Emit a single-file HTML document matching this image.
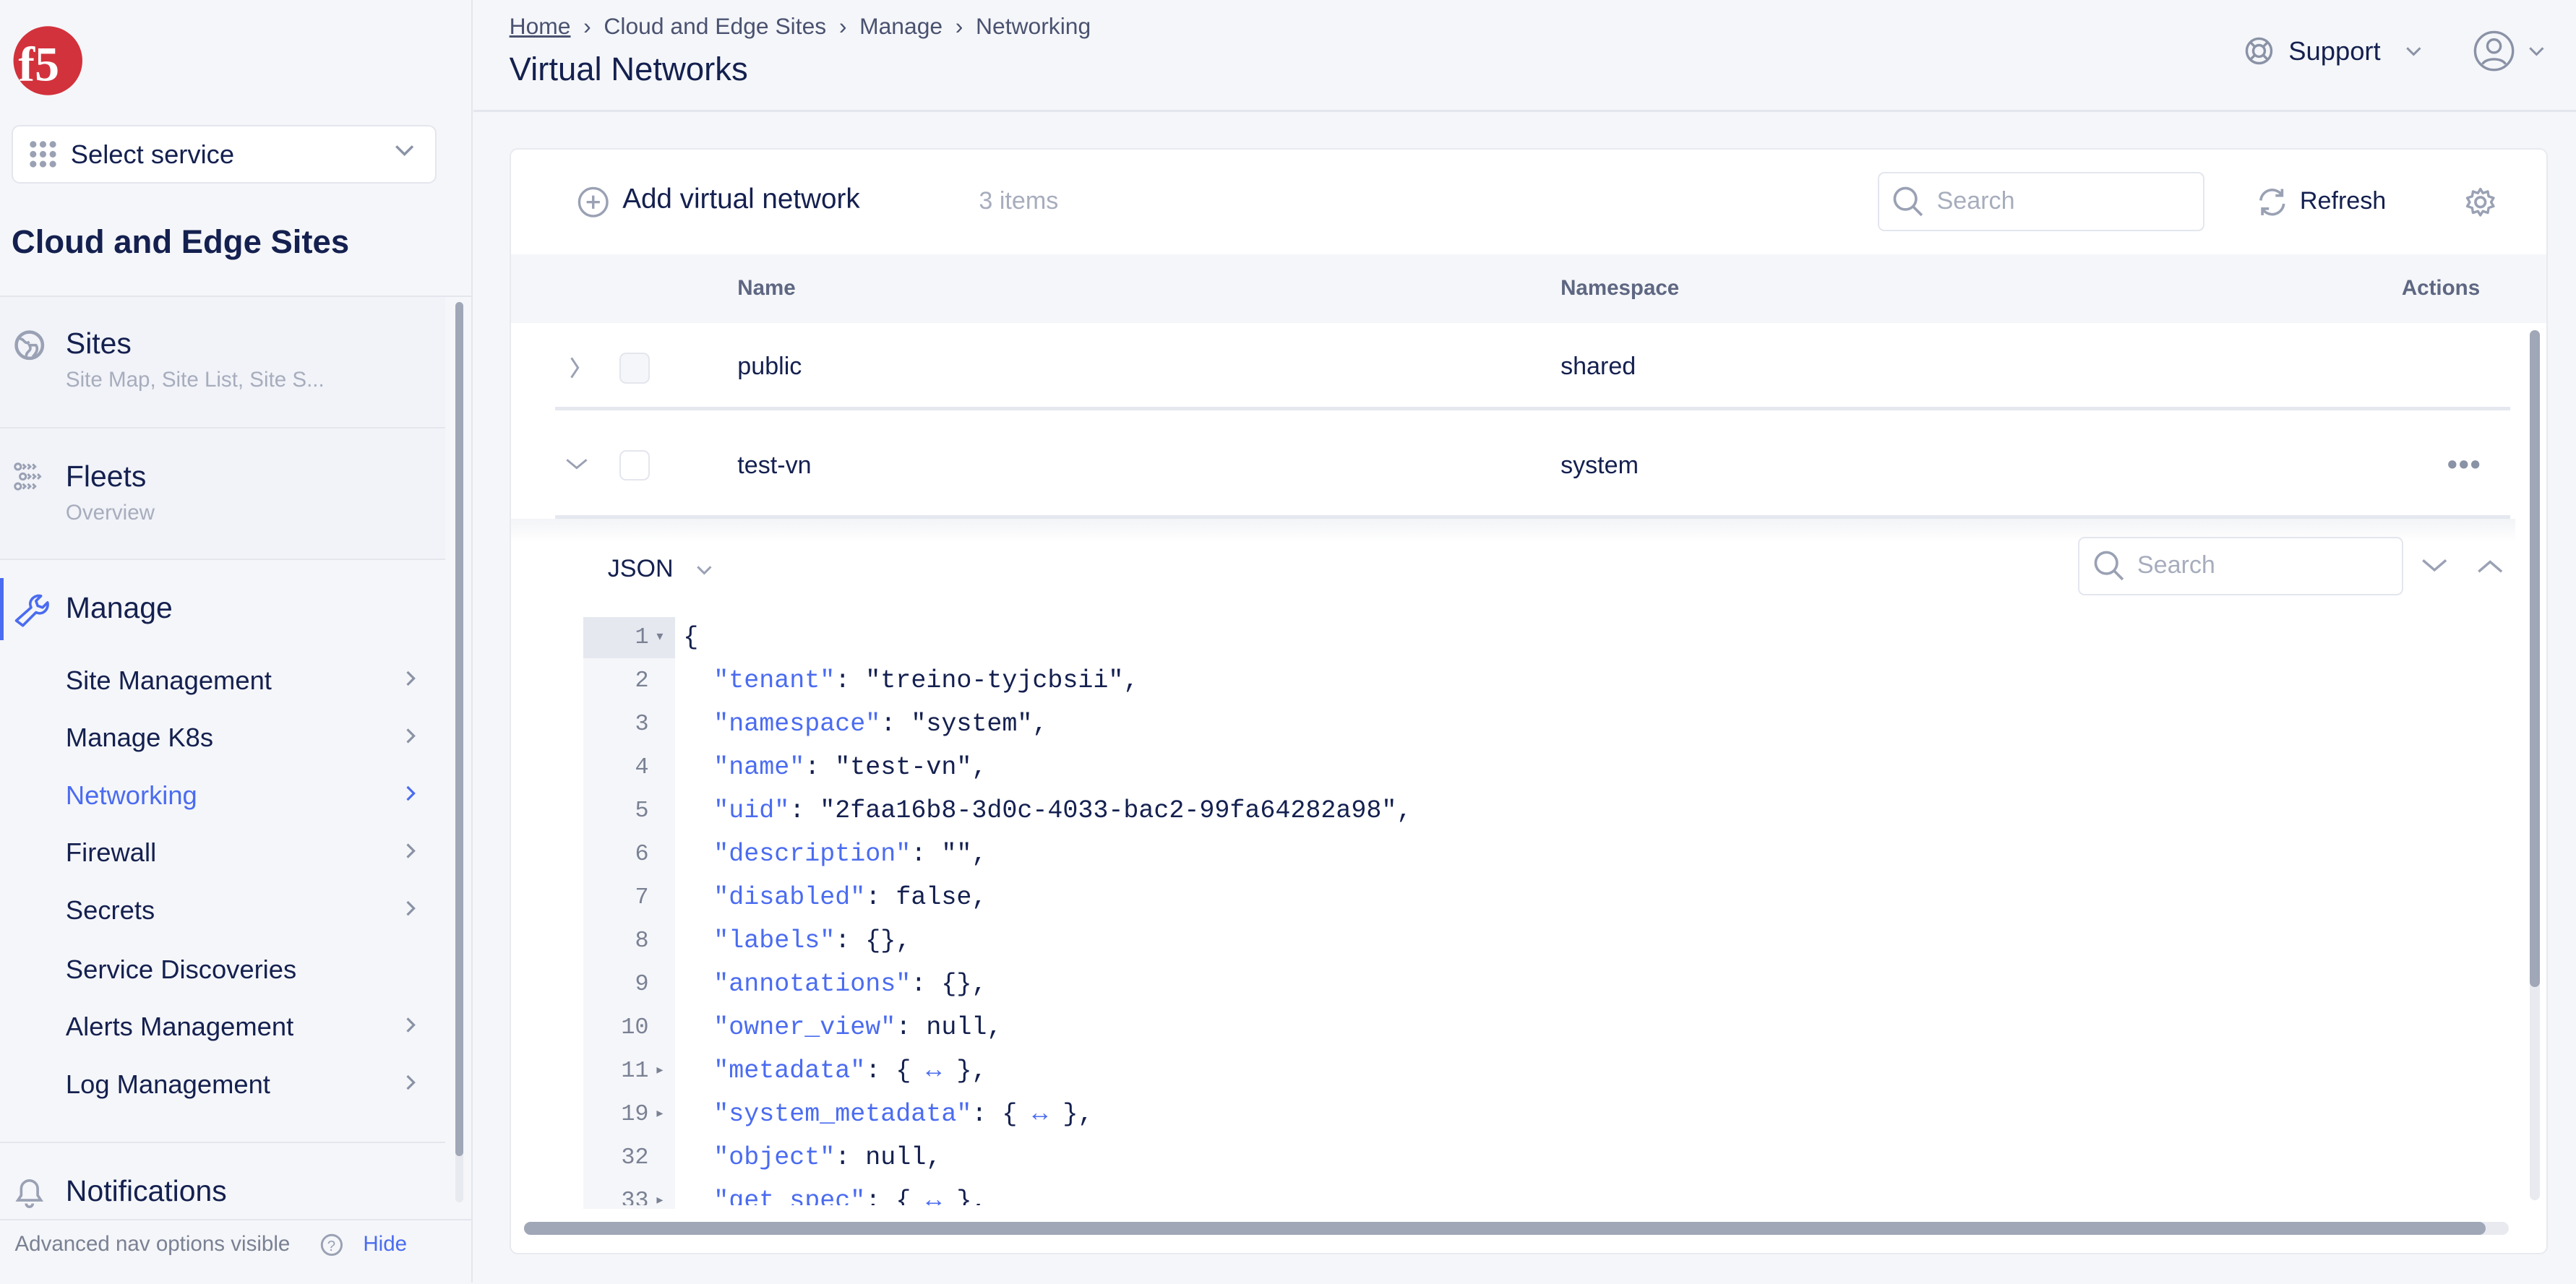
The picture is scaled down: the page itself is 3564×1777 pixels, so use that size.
<!DOCTYPE html>
<html><head><meta charset="utf-8"><style>
html,body{margin:0;padding:0}
body{width:1568px;height:781px;zoom:2.2730;overflow:hidden;background:#f5f6f9;font-family:"Liberation Sans",sans-serif;color:#14204f;position:relative}
.a{position:absolute}
.t{white-space:nowrap}
.side{left:0;top:0;width:287px;height:781px;background:#f5f6f9;border-right:1px solid #e4e6ee}
.sub{font-size:16px;color:#14204f}
.mono{font-family:"Liberation Mono",monospace;font-size:15.4px}
.k{color:#4b6cf0}
.ln{color:#7a8194;width:40px;text-align:right;font-size:14px}
</style></head><body>
<div class="a side">
 <svg class="a" style="left:6px;top:15px" width="46" height="46" viewBox="0 0 46 46"><circle cx="23" cy="22" r="21" fill="#d2323c"/><text x="5" y="34" font-family="Liberation Serif" font-weight="bold" font-size="30" fill="#fff">f5</text></svg>
 <div class="a" style="left:7px;top:76px;width:257px;height:34px;background:#fff;border:1px solid #e4e6ee;border-radius:5px"></div>
 <svg class="a" style="left:17px;top:85px" width="18" height="18"><g fill="#9aa1b4"><circle cx="3" cy="3" r="2"/><circle cx="9" cy="3" r="2"/><circle cx="15" cy="3" r="2"/><circle cx="3" cy="9" r="2"/><circle cx="9" cy="9" r="2"/><circle cx="15" cy="9" r="2"/><circle cx="3" cy="15" r="2"/><circle cx="9" cy="15" r="2"/><circle cx="15" cy="15" r="2"/></g></svg>
 <div class="a t" style="left:43px;top:85px;font-size:16px">Select service</div>
 <svg class="a" style="left:240px;top:88px" width="12" height="8"><path d="M1 1l5 5 5-5" stroke="#8a92a6" fill="none" stroke-width="1.5"/></svg>
 <div class="a t" style="left:7px;top:136px;font-size:20px;font-weight:bold">Cloud and Edge Sites</div>
 <div class="a" style="left:0;top:180px;width:287px;height:1px;background:#e4e6ee"></div>
 <div class="a" style="left:0;top:181px;width:271px;height:160px;background:#f1f3f8"></div>
 <svg class="a" style="left:8px;top:200px" width="20" height="20"><circle cx="10" cy="10" r="8" stroke="#9aa1b4" stroke-width="2" fill="none"/><path d="M4 6c3 0 3 4 6 2M8 17c0-4 4-3 2-7h4c2 3-1 6-2 7" stroke="#9aa1b4" stroke-width="1.6" fill="none"/></svg>
 <div class="a t" style="left:40px;top:199px;font-size:18px">Sites</div>
 <div class="a t" style="left:40px;top:224px;font-size:13px;color:#a7adbd">Site Map, Site List, Site S...</div>
 <div class="a" style="left:0;top:260px;width:271px;height:1px;background:#e4e6ee"></div>
 <svg class="a" style="left:8px;top:281px" width="20" height="18"><g fill="none" stroke="#9aa1b4" stroke-width="1.3"><circle cx="3" cy="3" r="1.8"/><path d="M6 1.5l1.5 1.5L6 4.5M9 1.5l1.5 1.5L9 4.5M12 1.5l1.5 1.5L12 4.5"/><circle cx="6" cy="9" r="1.8"/><path d="M9 7.5l1.5 1.5L9 10.5M12 7.5l1.5 1.5L12 10.5M15 7.5l1.5 1.5L15 10.5"/><circle cx="3" cy="15" r="1.8"/><path d="M6 13.5l1.5 1.5L6 16.5M9 13.5l1.5 1.5L9 16.5M12 13.5l1.5 1.5L12 16.5"/></g></svg>
 <div class="a t" style="left:40px;top:280px;font-size:18px">Fleets</div>
 <div class="a t" style="left:40px;top:305px;font-size:13px;color:#a7adbd">Overview</div>
 <div class="a" style="left:0;top:340px;width:271px;height:1px;background:#e4e6ee"></div>
 <div class="a" style="left:0;top:352px;width:2px;height:38px;background:#4b6cf0"></div>
 <svg class="a" style="left:8px;top:360px" width="22" height="22"><path d="M2 18l9-8c-2-4 2-8 6-7l-3 3 1 3 3 1 3-3c1 4-3 8-7 6l-8 8z" stroke="#4b6cf0" stroke-width="1.6" fill="none" stroke-linejoin="round"/></svg>
 <div class="a t" style="left:40px;top:360px;font-size:18px">Manage</div>
 <div class="a t sub" style="left:40px;top:405px">Site Management</div>
 <div class="a t sub" style="left:40px;top:440px">Manage K8s</div>
 <div class="a t sub" style="left:40px;top:475px;color:#4b6cf0">Networking</div>
 <div class="a t sub" style="left:40px;top:510px">Firewall</div>
 <div class="a t sub" style="left:40px;top:545px">Secrets</div>
 <div class="a t sub" style="left:40px;top:581px">Service Discoveries</div>
 <div class="a t sub" style="left:40px;top:616px">Alerts Management</div>
 <div class="a t sub" style="left:40px;top:651px">Log Management</div>
 <svg class="a" style="left:246px;top:406px" width="8" height="260"><g stroke="#8a92a6" stroke-width="1.4" fill="none"><path d="M2 3l4 4-4 4"/><path d="M2 38l4 4-4 4"/><path d="M2 73l4 4-4 4" stroke="#4b6cf0"/><path d="M2 108l4 4-4 4"/><path d="M2 143l4 4-4 4"/><path d="M2 214l4 4-4 4"/><path d="M2 249l4 4-4 4"/></g></svg>
 <div class="a" style="left:0;top:695px;width:271px;height:1px;background:#e4e6ee"></div>
 <svg class="a" style="left:8px;top:716px" width="20" height="20"><path d="M3 15h14l-2-3V8a5 5 0 0 0-10 0v4z M8 17a2 2 0 0 0 4 0" stroke="#9aa1b4" stroke-width="1.6" fill="none"/></svg>
 <div class="a t" style="left:40px;top:715px;font-size:18px">Notifications</div>
 <div class="a" style="left:0;top:742px;width:287px;height:39px;background:#f5f6f9;border-top:1px solid #e4e6ee"></div>
 <div class="a t" style="left:9px;top:750px;font-size:13px;color:#7a8194">Advanced nav options visible</div>
 <svg class="a" style="left:195px;top:751px" width="14" height="14"><circle cx="7" cy="7" r="6" stroke="#9aa1b4" fill="none" stroke-width="1.3"/><text x="4.3" y="10.5" font-size="9" fill="#9aa1b4" font-family="Liberation Sans">?</text></svg>
 <div class="a t" style="left:221px;top:750px;font-size:13px;color:#4b6cf0">Hide</div>
 <div class="a" style="left:277px;top:184px;width:5px;height:548px;background:#e8eaf0;border-radius:3px"></div>
 <div class="a" style="left:277px;top:184px;width:5px;height:520px;background:#a0a7b7;border-radius:3px"></div>
</div>

<div class="a t" style="left:310px;top:8px;font-size:14px;color:#4a5270"><span style="text-decoration:underline">Home</span> &nbsp;›&nbsp; Cloud and Edge Sites &nbsp;›&nbsp; Manage &nbsp;›&nbsp; Networking</div>
<div class="a t" style="left:310px;top:31px;font-size:20px">Virtual Networks</div>
<svg class="a" style="left:1366px;top:22px" width="18" height="18"><circle cx="9" cy="9" r="7.5" stroke="#8a92a6" stroke-width="1.5" fill="none"/><circle cx="9" cy="9" r="3.5" stroke="#8a92a6" stroke-width="1.5" fill="none"/><path d="M4 4l2.5 2.5M14 4l-2.5 2.5M4 14l2.5-2.5M14 14l-2.5-2.5" stroke="#8a92a6" stroke-width="1.5"/></svg>
<div class="a t" style="left:1393px;top:22px;font-size:16px">Support</div>
<svg class="a" style="left:1464px;top:28px" width="10" height="7"><path d="M1 1l4 4 4-4" stroke="#8a92a6" fill="none" stroke-width="1.3"/></svg>
<svg class="a" style="left:1505px;top:18px" width="26" height="26"><circle cx="13" cy="13" r="11.5" stroke="#8a92a6" stroke-width="1.5" fill="none"/><circle cx="13" cy="10" r="4" stroke="#8a92a6" stroke-width="1.5" fill="none"/><path d="M6 21c2-4 12-4 14 0" stroke="#8a92a6" stroke-width="1.5" fill="none"/></svg>
<svg class="a" style="left:1539px;top:28px" width="10" height="7"><path d="M1 1l4 4 4-4" stroke="#8a92a6" fill="none" stroke-width="1.3"/></svg>
<div class="a" style="left:288px;top:67px;width:1280px;height:1px;background:#e4e6ee"></div>

<div class="a" style="left:310px;top:90px;width:1239px;height:672px;background:#fff;border:1px solid #e8eaf0;border-radius:5px;overflow:hidden">
 <svg class="a" style="left:40px;top:22px" width="20" height="20"><circle cx="10" cy="10" r="8.5" stroke="#9aa1b4" stroke-width="1.5" fill="none"/><path d="M10 6v8M6 10h8" stroke="#9aa1b4" stroke-width="1.5"/></svg>
 <div class="a t" style="left:68px;top:21px;font-size:17px">Add virtual network</div>
 <div class="a t" style="left:285px;top:23px;font-size:15px;color:#a7adbd">3 items</div>
 <div class="a" style="left:832px;top:14px;width:197px;height:34px;border:1px solid #e4e6ee;border-radius:4px"></div>
 <svg class="a" style="left:841px;top:22px" width="20" height="20"><circle cx="8" cy="8" r="6.5" stroke="#9aa1b4" stroke-width="1.6" fill="none"/><path d="M13 13l5 5" stroke="#9aa1b4" stroke-width="1.6"/></svg>
 <div class="a t" style="left:868px;top:23px;font-size:15px;color:#a7adbd">Search</div>
 <svg class="a" style="left:1062px;top:22px" width="20" height="20"><path d="M3 9a7 7 0 0 1 13-3M17 11a7 7 0 0 1-13 3M16 2v4h-4M4 18v-4h4" stroke="#9aa1b4" stroke-width="1.6" fill="none"/></svg>
 <div class="a t" style="left:1089px;top:23px;font-size:15px">Refresh</div>
 <svg class="a" style="left:1189px;top:22px" width="20" height="20"><circle cx="10" cy="10" r="3" stroke="#9aa1b4" stroke-width="1.6" fill="none"/><path d="M10 2l1.5 2.5 3-1 .5 3 3 1-1.5 2.5 1.5 2.5-3 1-.5 3-3-1L10 18l-1.5-2.5-3 1-.5-3-3-1L3.5 10 2 7.5l3-1 .5-3 3 1z" stroke="#9aa1b4" stroke-width="1.5" fill="none" stroke-linejoin="round"/></svg>
 <div class="a" style="left:0;top:64px;width:1239px;height:42px;background:#f5f6f9"></div>
 <div class="a t" style="left:138px;top:77px;font-size:13px;font-weight:bold;color:#5e6782">Name</div>
 <div class="a t" style="left:639px;top:77px;font-size:13px;font-weight:bold;color:#5e6782">Namespace</div>
 <div class="a t" style="left:1151px;top:77px;font-size:13px;font-weight:bold;color:#5e6782">Actions</div>
 <svg class="a" style="left:35px;top:126px" width="8" height="14"><path d="M2 1l4 6-4 6" stroke="#9aa1b4" stroke-width="1.3" fill="none"/></svg>
 <div class="a" style="left:66px;top:124px;width:17px;height:17px;border:1px solid #e4e6ee;border-radius:4px;background:#f5f6f9"></div>
 <div class="a t" style="left:138px;top:124px;font-size:15px">public</div>
 <div class="a t" style="left:639px;top:124px;font-size:15px">shared</div>
 <div class="a" style="left:27px;top:157px;width:1190px;height:2px;background:#e6e8f0"></div>
 <svg class="a" style="left:33px;top:188px" width="14" height="8"><path d="M1 1l6 5 6-5" stroke="#9aa1b4" stroke-width="1.3" fill="none"/></svg>
 <div class="a" style="left:66px;top:183px;width:17px;height:17px;border:1px solid #e4e6ee;border-radius:4px"></div>
 <div class="a t" style="left:138px;top:184px;font-size:15px">test-vn</div>
 <div class="a t" style="left:639px;top:184px;font-size:15px">system</div>
 <svg class="a" style="left:1179px;top:189px" width="20" height="6"><g fill="#8a92a6"><circle cx="3" cy="3" r="2.5"/><circle cx="10" cy="3" r="2.5"/><circle cx="17" cy="3" r="2.5"/></g></svg>
 <div class="a" style="left:27px;top:223px;width:1190px;height:2px;background:#e6e8f0"></div>
 <div class="a" style="left:0;top:225px;width:1220px;height:14px;background:linear-gradient(#f3f4f7,#fff)"></div>
 <div class="a t" style="left:59px;top:247px;font-size:15px">JSON</div>
 <svg class="a" style="left:113px;top:253px" width="10" height="7"><path d="M1 1l4 4 4-4" stroke="#9aa1b4" fill="none" stroke-width="1.3"/></svg>
 <div class="a" style="left:954px;top:236px;width:196px;height:34px;border:1px solid #e4e6ee;border-radius:4px"></div>
 <svg class="a" style="left:963px;top:244px" width="20" height="20"><circle cx="8" cy="8" r="6.5" stroke="#9aa1b4" stroke-width="1.6" fill="none"/><path d="M13 13l5 5" stroke="#9aa1b4" stroke-width="1.6"/></svg>
 <div class="a t" style="left:990px;top:245px;font-size:15px;color:#a7adbd">Search</div>
 <svg class="a" style="left:1163px;top:249px" width="16" height="9"><path d="M1 1l7 6 7-6" stroke="#9aa1b4" fill="none" stroke-width="1.5"/></svg>
 <svg class="a" style="left:1197px;top:249px" width="16" height="9"><path d="M1 8l7-6 7 6" stroke="#9aa1b4" fill="none" stroke-width="1.5"/></svg>
 <div class="a" style="left:44px;top:285px;width:56px;height:360px;background:#f5f6f9"></div>
 <div class="a" style="left:44px;top:285px;width:56px;height:25px;background:#e6e8f0"></div>
 <div class="a mono" style="left:44px;top:284px;width:1180px;line-height:26.4px">
  <div style="display:flex"><span class="ln">1</span><span style="width:21px;font-size:8px;color:#7a8194">&nbsp;▾</span><span>{</span></div>
  <div style="display:flex"><span class="ln">2</span><span style="width:21px"></span><span>&nbsp;&nbsp;<span class="k">"tenant"</span>: "treino-tyjcbsii",</span></div>
  <div style="display:flex"><span class="ln">3</span><span style="width:21px"></span><span>&nbsp;&nbsp;<span class="k">"namespace"</span>: "system",</span></div>
  <div style="display:flex"><span class="ln">4</span><span style="width:21px"></span><span>&nbsp;&nbsp;<span class="k">"name"</span>: "test-vn",</span></div>
  <div style="display:flex"><span class="ln">5</span><span style="width:21px"></span><span>&nbsp;&nbsp;<span class="k">"uid"</span>: "2faa16b8-3d0c-4033-bac2-99fa64282a98",</span></div>
  <div style="display:flex"><span class="ln">6</span><span style="width:21px"></span><span>&nbsp;&nbsp;<span class="k">"description"</span>: "",</span></div>
  <div style="display:flex"><span class="ln">7</span><span style="width:21px"></span><span>&nbsp;&nbsp;<span class="k">"disabled"</span>: false,</span></div>
  <div style="display:flex"><span class="ln">8</span><span style="width:21px"></span><span>&nbsp;&nbsp;<span class="k">"labels"</span>: {},</span></div>
  <div style="display:flex"><span class="ln">9</span><span style="width:21px"></span><span>&nbsp;&nbsp;<span class="k">"annotations"</span>: {},</span></div>
  <div style="display:flex"><span class="ln">10</span><span style="width:21px"></span><span>&nbsp;&nbsp;<span class="k">"owner_view"</span>: null,</span></div>
  <div style="display:flex"><span class="ln">11</span><span style="width:21px;font-size:8px;color:#7a8194">&nbsp;▸</span><span>&nbsp;&nbsp;<span class="k">"metadata"</span>: { <span class="k">↔</span> },</span></div>
  <div style="display:flex"><span class="ln">19</span><span style="width:21px;font-size:8px;color:#7a8194">&nbsp;▸</span><span>&nbsp;&nbsp;<span class="k">"system_metadata"</span>: { <span class="k">↔</span> },</span></div>
  <div style="display:flex"><span class="ln">32</span><span style="width:21px"></span><span>&nbsp;&nbsp;<span class="k">"object"</span>: null,</span></div>
  <div style="display:flex;height:16px;overflow:hidden"><span class="ln">33</span><span style="width:21px;font-size:8px;color:#7a8194">&nbsp;▸</span><span>&nbsp;&nbsp;<span class="k">"get_spec"</span>: { <span class="k">↔</span> },</span></div>
 </div>
 <div class="a" style="left:1229px;top:110px;width:6px;height:530px;background:#e8eaf0;border-radius:3px"></div>
 <div class="a" style="left:1229px;top:110px;width:6px;height:400px;background:#a0a7b7;border-radius:3px"></div>
 <div class="a" style="left:8px;top:653px;width:1208px;height:8px;background:#e8eaf0;border-radius:4px"></div>
 <div class="a" style="left:8px;top:653px;width:1194px;height:8px;background:#a0a7b7;border-radius:4px"></div>
</div>
</body></html>
